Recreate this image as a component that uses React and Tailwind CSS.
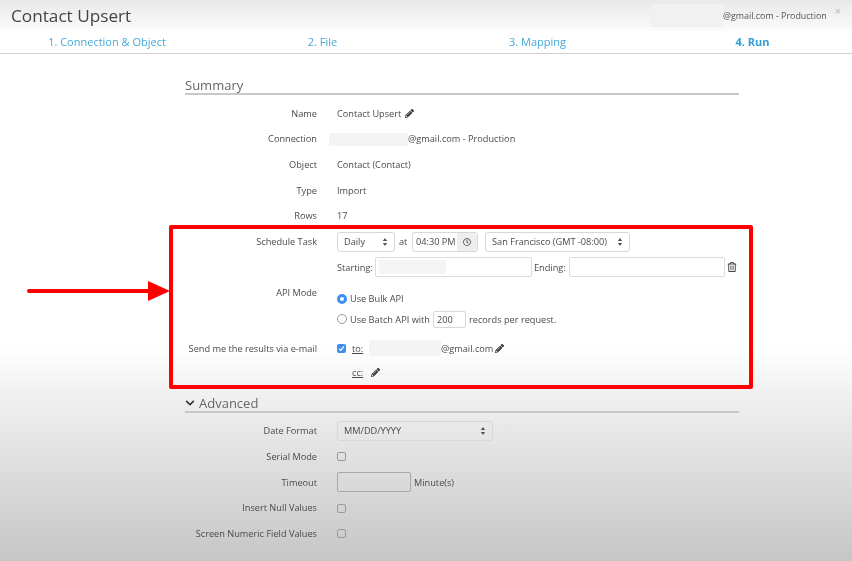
import React from "react";
import { FaPencilAlt, FaRegClock, FaRegTrashAlt, FaChevronDown } from "react-icons/fa";

const Pencil = ({ className = "" }) => <FaPencilAlt className={`text-[9px] text-[#333] ${className}`} />;

const UpDown = () => (
  <svg width="6" height="10" viewBox="0 0 6 10" className="shrink-0">
    <path d="M3 1 L5.2 4 H0.8 Z M3 9 L0.8 6 H5.2 Z" fill="#555" />
  </svg>
);

const Select = ({ className, children }) => (
  <div className={`flex h-[20px] items-center justify-between rounded-[3px] border border-[#d8d8d8] px-[6px] ${className}`}>
    <span>{children}</span>
    <UpDown />
  </div>
);

const Row = ({ label, h, children, labelClass = "" }) => (
  <div className={`flex items-center gap-[20px] ${h}`}>
    <div className={`w-[132px] shrink-0 text-right ${labelClass}`}>{label}</div>
    <div className="flex min-w-0 flex-1 items-center">{children}</div>
  </div>
);

const Check = () => <div className="h-[9px] w-[9px] rounded-[2px] border border-[#999]" />;

const Heading = ({ children, className = "" }) => (
  <div className={`flex h-[20px] items-end gap-[4px] border-b-2 border-[#c8c8c8] text-[13px] leading-[16px] text-[#666] ${className}`}>
    {children}
  </div>
);

export default function App() {
  return (
    <div className="relative h-[561px] w-[852px] overflow-hidden bg-[linear-gradient(to_bottom,#ffffff_0%,#ffffff_62%,#f1f1f1_70%,#c6c6c6_100%)] font-['Open_Sans',sans-serif] text-[9.2px] text-[#4a4a4a]">
      <div className="blur-[0.35px]">
        <header className="flex h-[31px] items-center justify-between bg-[linear-gradient(to_bottom,#e9e9e9,#fbfbfb)] px-[11px]">
          <h1 className="text-[17.2px] leading-[24px] text-[#444]">Contact Upsert</h1>
          <div className="flex items-center">
            <div className="h-[23px] w-[72px] bg-[#f1f1f1]" />
            <span className="text-[8.9px] text-[#555]">@gmail.com - Production</span>
            <span className="-mt-[10px] ml-[8px] text-[11px] font-bold leading-none text-[#c4c4c4]">×</span>
          </div>
        </header>
        <nav className="flex h-[23px] w-[860px] items-center border-b border-[#d0d0d0] bg-white text-[11px] text-[#45a9d8]">
          <div className="w-[215px] pr-[1px] text-center">1. Connection &amp; Object</div>
          <div className="w-[215px] text-center">2. File</div>
          <div className="w-[215px] text-center">3. Mapping</div>
          <div className="w-[215px] text-center font-bold text-[#2f9fd4]">4. Run</div>
        </nav>

        <main className="ml-[185px] w-[554px] pt-[21px]">
          <Heading>Summary</Heading>
          <div className="pt-[6px]">
            <Row label="Name" h="h-[25.6px]">
              <span>Contact Upsert</span>
              <Pencil className="ml-[4px]" />
            </Row>
            <Row label="Connection" h="h-[25.6px]">
              <div className="-ml-[8px] h-[13px] w-[79px] bg-[#f4f4f4]" />
              <span>@gmail.com - Production</span>
            </Row>
            <Row label="Object" h="h-[25.6px]">Contact (Contact)</Row>
            <Row label="Type" h="h-[25.6px]">Import</Row>
            <Row label="Rows" h="h-[25.6px]">17</Row>
          </div>

          <div>
            <Row label="Schedule Task" h="h-[26px]">
              <Select className="w-[58px]">Daily</Select>
              <span className="ml-[4px] w-[13px]">at</span>
              <div className="flex h-[20px] w-[66px] rounded-[3px] border border-[#d8d8d8]">
                <div className="flex flex-1 items-center pl-[3px]">04:30 PM</div>
                <div className="flex w-[20px] items-center justify-center bg-[#eeeeee]">
                  <FaRegClock className="text-[8px] text-[#444]" />
                </div>
              </div>
              <Select className="ml-[7px] w-[145px]">San Francisco (GMT -08:00)</Select>
            </Row>
            <Row label="" h="h-[25px]">
              <span className="w-[38px]">Starting:</span>
              <div className="flex h-[20px] w-[157px] items-center rounded-[2px] border border-[#dcdcdc] pl-[3px]">
                <div className="h-[14px] w-[67px] bg-[#f5f5f5]" />
              </div>
              <span className="ml-[2px] w-[35px]">Ending:</span>
              <div className="h-[20px] w-[156px] rounded-[2px] border border-[#dcdcdc]" />
              <FaRegTrashAlt className="ml-[2px] text-[10px] text-[#444]" />
            </Row>
            <div className="flex items-start gap-[20px] pt-[5px]">
              <div className="w-[132px] shrink-0 pt-[1px] text-right">API Mode</div>
              <div className="flex-1">
                <div className="flex h-[21px] items-center pt-[7px]">
                  <div className="h-[10px] w-[10px] rounded-full border-[3px] border-[#3b8ff0] bg-white" />
                  <span className="ml-[3px]">Use Bulk API</span>
                </div>
                <div className="mt-[4px] flex h-[19px] items-center">
                  <div className="h-[10px] w-[10px] rounded-full border border-[#999]" />
                  <span className="ml-[3px] w-[83px]">Use Batch API with</span>
                  <div className="flex h-[17px] w-[33px] items-center rounded-[2px] border border-[#d8d8d8] pl-[3px]">200</div>
                  <span className="ml-[3px]">records per request.</span>
                </div>
              </div>
            </div>
            <Row label="Send me the results via e-mail" h="h-[39px]" labelClass="whitespace-nowrap">
              <div className="flex h-[9px] w-[9px] items-center justify-center rounded-[2px] bg-[#3b8ff0]">
                <svg width="7" height="7" viewBox="0 0 7 7"><path d="M1 3.6 L2.8 5.4 L6 1.4" stroke="#fff" strokeWidth="1.3" fill="none" /></svg>
              </div>
              <span className="ml-[6px] w-[17px] underline">to:</span>
              <div className="h-[16px] w-[72px] bg-[#f4f4f4]" />
              <span>@gmail.com</span>
              <Pencil className="ml-[2px]" />
            </Row>
            <Row label="" h="h-[10px]">
              <span className="ml-[15px] w-[19px] underline">cc:</span>
              <Pencil />
            </Row>
          </div>

          <Heading className="mt-[15px]">
            <FaChevronDown className="mb-[3px] text-[10px] text-[#333]" />
            Advanced
          </Heading>
          <div className="pt-[5.5px]">
            <Row label="Date Format" h="h-[25.6px]">
              <Select className="w-[156px]">MM/DD/YYYY</Select>
            </Row>
            <Row label="Serial Mode" h="h-[25.6px]"><Check /></Row>
            <Row label="Timeout" h="h-[25.6px]">
              <div className="h-[20px] w-[74px] rounded-[2px] border border-[#a8a8a8]" />
              <span className="ml-[3px]">Minute(s)</span>
            </Row>
            <Row label="Insert Null Values" h="h-[25.6px]"><Check /></Row>
            <Row label="Screen Numeric Field Values" h="h-[25.6px]" labelClass="whitespace-nowrap"><Check /></Row>
          </div>
        </main>
      </div>

      <div className="pointer-events-none absolute left-[169px] top-[225px] h-[164px] w-[584px] rounded-[2px] border-[4px] border-[#ff0000]" />
      <svg className="pointer-events-none absolute left-[27px] top-[280px]" width="144" height="22" viewBox="0 0 144 22">
        <path d="M2 11 H124" stroke="#ff0000" strokeWidth="4" strokeLinecap="round" />
        <path d="M121 1 L143 11 L121 21 Z" fill="#ff0000" />
      </svg>
    </div>
  );
}
